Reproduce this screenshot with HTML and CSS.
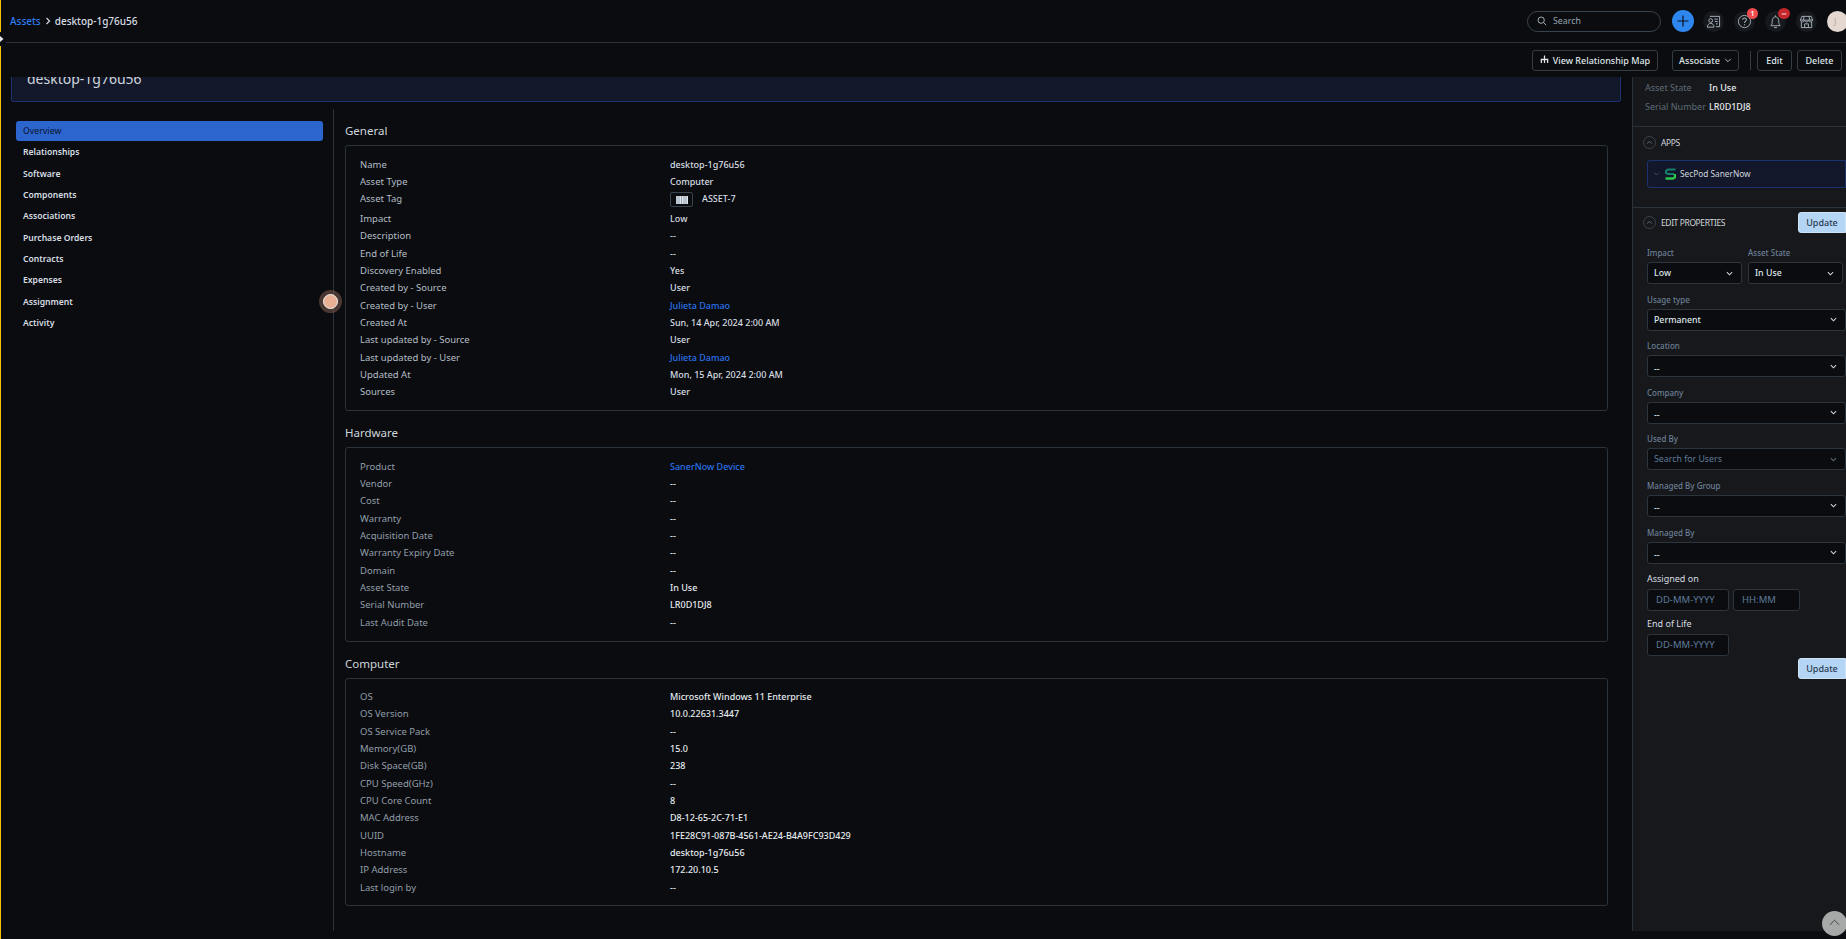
FILE: index.html
```html
<!DOCTYPE html>
<html lang="en">
<head>
<meta charset="utf-8">
<title>desktop-1g76u56</title>
<link rel="stylesheet" href="styles.css">
</head>
<body>
<div class="app">
  <header class="topbar">
    <nav class="crumbs"><a class="crumb-link">Assets</a><svg class="crumb-sep" viewBox="0 0 8 8"><path d="M2.5 1 5.5 4 2.5 7" fill="none" stroke="#c9d1da" stroke-width="1.3"/></svg><span class="crumb-current">desktop-1g76u56</span></nav>
    <div class="top-tools">
      <div class="search"><svg class="search-icon" viewBox="0 0 12 12"><circle cx="5" cy="5" r="3.8" fill="none" stroke="#c4ccd4"/><path d="M8 8l3 3" stroke="#c4ccd4"/></svg><span>Search</span></div>
      <button class="plus"><svg viewBox="0 0 12 12"><path d="M6 .5v11M.5 6h11" stroke="#0b1220" stroke-width="1.2"/></svg></button>
      <span class="tool"><svg viewBox="0 0 16 16"><circle cx="5" cy="7" r="2" fill="none" stroke="#aab3bc"/><path d="M1.5 14c0-2.500 1.500-4 3.500-4s3.500 1.500 3.500 4zM4 2.500h10.500v11h-4M9 5.500h3.500M9.500 8h3M10.500 10.500h2" fill="none" stroke="#aab3bc"/></svg></span>
      <span class="tool"><svg viewBox="0 0 16 16"><circle cx="8" cy="8" r="6.500" fill="none" stroke="#aab3bc"/><path d="M6 6.200c0-2.600 4-2.600 4 0 0 1.700-2 1.700-2 3.300M8 11v1" fill="none" stroke="#aab3bc" stroke-width="1.100"/></svg><b class="badge">1</b></span>
      <span class="tool"><svg viewBox="0 0 16 16"><path d="M3 12.500h10c-1.300-1.300-1.500-2.500-1.500-5C11.500 5 10 3 8 3S4.500 5 4.500 7.500c0 2.500-.2 3.700-1.500 5zM6.500 14.500h3M8 1.500V3" fill="none" stroke="#aab3bc"/></svg><b class="badge badge-dark">∞</b></span>
      <span class="tool"><svg viewBox="0 0 16 16"><path d="M3 2.500h10l1.500 4H1.500zM1.500 6.500c0 2.500 4.300 2.500 4.300 0 0 2.500 4.400 2.500 4.400 0 0 2.500 4.300 2.500 4.300 0M2.500 8.500v6h11v-6M6 14.500v-4h4v4M5.500 2.500l-1 4M10.500 2.500l1 4" fill="none" stroke="#aab3bc"/></svg></span>
      <span class="avatar">J</span>
    </div>
  </header>

  <div class="actions">
    <button class="btn btn-map"><svg class="map-icon" viewBox="0 0 10 10"><path d="M5 .5v4M1.500 9V5h7v4M5 4.500V9" fill="none" stroke="#dfe5ea" stroke-width="1.400"/></svg>View Relationship Map</button>
    <button class="btn btn-assoc">Associate<svg class="caret" viewBox="0 0 10 6"><path d="M1.500 1 5 4.500 8.500 1" fill="none" stroke="#dfe5ea"/></svg></button>
    <span class="action-sep"></span>
    <button class="btn btn-edit">Edit</button>
    <button class="btn btn-delete">Delete</button>
  </div>

  <div class="body">
    <main class="main">
      <div class="title-card"><h1>desktop-1g76u56</h1></div>
      <div class="columns">
        <aside class="sidenav">
          <a class="nav-item active">Overview</a>
          <a class="nav-item">Relationships</a>
          <a class="nav-item">Software</a>
          <a class="nav-item">Components</a>
          <a class="nav-item">Associations</a>
          <a class="nav-item">Purchase Orders</a>
          <a class="nav-item">Contracts</a>
          <a class="nav-item">Expenses</a>
          <a class="nav-item">Assignment</a>
          <a class="nav-item">Activity</a>
        </aside>
        <div class="details">
          <section class="group">
            <h2>General</h2>
            <dl class="card card-general">
              <div class="row"><dt>Name</dt><dd>desktop-1g76u56</dd></div>
              <div class="row"><dt>Asset Type</dt><dd>Computer</dd></div>
              <div class="row row-tag"><dt>Asset Tag</dt><dd class="tag-cell"><span class="barcode"><svg viewBox="0 0 12 8"><rect width="12" height="8" fill="#8ea0b5"/><path d="M1 0v8M3 0v8M4.500 0v8M6.500 0v8M8 0v8M10 0v8M11.500 0v8" stroke="#e6e9ec" stroke-width="1"/></svg></span>ASSET-7</dd></div>
              <div class="row"><dt>Impact</dt><dd>Low</dd></div>
              <div class="row"><dt>Description</dt><dd>--</dd></div>
              <div class="row"><dt>End of Life</dt><dd>--</dd></div>
              <div class="row"><dt>Discovery Enabled</dt><dd>Yes</dd></div>
              <div class="row"><dt>Created by - Source</dt><dd>User</dd></div>
              <div class="row"><dt>Created by - User</dt><dd><a class="link">Julieta Damao</a></dd></div>
              <div class="row"><dt>Created At</dt><dd>Sun, 14 Apr, 2024 2:00 AM</dd></div>
              <div class="row"><dt>Last updated by - Source</dt><dd>User</dd></div>
              <div class="row"><dt>Last updated by - User</dt><dd><a class="link">Julieta Damao</a></dd></div>
              <div class="row"><dt>Updated At</dt><dd>Mon, 15 Apr, 2024 2:00 AM</dd></div>
              <div class="row"><dt>Sources</dt><dd>User</dd></div>
            </dl>
          </section>
          <section class="group">
            <h2>Hardware</h2>
            <dl class="card">
              <div class="row"><dt>Product</dt><dd><a class="link">SanerNow Device</a></dd></div>
              <div class="row"><dt>Vendor</dt><dd>--</dd></div>
              <div class="row"><dt>Cost</dt><dd>--</dd></div>
              <div class="row"><dt>Warranty</dt><dd>--</dd></div>
              <div class="row"><dt>Acquisition Date</dt><dd>--</dd></div>
              <div class="row"><dt>Warranty Expiry Date</dt><dd>--</dd></div>
              <div class="row"><dt>Domain</dt><dd>--</dd></div>
              <div class="row"><dt>Asset State</dt><dd>In Use</dd></div>
              <div class="row"><dt>Serial Number</dt><dd>LR0D1DJ8</dd></div>
              <div class="row"><dt>Last Audit Date</dt><dd>--</dd></div>
            </dl>
          </section>
          <section class="group">
            <h2>Computer</h2>
            <dl class="card">
              <div class="row"><dt>OS</dt><dd>Microsoft Windows 11 Enterprise</dd></div>
              <div class="row"><dt>OS Version</dt><dd>10.0.22631.3447</dd></div>
              <div class="row"><dt>OS Service Pack</dt><dd>--</dd></div>
              <div class="row"><dt>Memory(GB)</dt><dd>15.0</dd></div>
              <div class="row"><dt>Disk Space(GB)</dt><dd>238</dd></div>
              <div class="row"><dt>CPU Speed(GHz)</dt><dd>--</dd></div>
              <div class="row"><dt>CPU Core Count</dt><dd>8</dd></div>
              <div class="row"><dt>MAC Address</dt><dd>D8-12-65-2C-71-E1</dd></div>
              <div class="row"><dt>UUID</dt><dd>1FE28C91-087B-4561-AE24-B4A9FC93D429</dd></div>
              <div class="row"><dt>Hostname</dt><dd>desktop-1g76u56</dd></div>
              <div class="row"><dt>IP Address</dt><dd>172.20.10.5</dd></div>
              <div class="row"><dt>Last login by</dt><dd>--</dd></div>
            </dl>
          </section>
        </div>
      </div>
    </main>

    <aside class="panel">
      <div class="panel-summary">
        <div class="summary-row"><span class="summary-label">Asset State</span><span class="summary-value">In Use</span></div>
        <div class="summary-row"><span class="summary-label">Serial Number</span><span class="summary-value">LR0D1DJ8</span></div>
      </div>
      <section class="panel-apps">
        <div class="panel-head"><span class="collapse"><svg viewBox="0 0 10 6"><path d="M1.500 4.500 5 1.500 8.500 4.500" fill="none" stroke="#7d8b98"/></svg></span><span>APPS</span></div>
        <div class="app-card">
          <svg class="app-caret" viewBox="0 0 10 6"><path d="M1.500 1 5 4.500 8.500 1" fill="none" stroke="#5d6c7a"/></svg>
          <svg class="app-logo" viewBox="0 0 11 12"><path d="M10.500 1.500H3L1 3v2l2 1h6" fill="none" stroke="#17806a" stroke-width="2"/><path d="M.5 10.500H8l2-1.300V6" fill="none" stroke="#2bc84b" stroke-width="2.400"/></svg>
          <span>SecPod SanerNow</span>
        </div>
      </section>
      <section class="panel-edit">
        <div class="edit-head">
          <div class="panel-head"><span class="collapse"><svg viewBox="0 0 10 6"><path d="M1.500 4.500 5 1.500 8.500 4.500" fill="none" stroke="#7d8b98"/></svg></span><span>EDIT PROPERTIES</span></div>
          <button class="update">Update</button>
        </div>
        <div class="field-pair">
          <div class="field field-half"><label>Impact</label><div class="select">Low<svg class="chev" viewBox="0 0 8 5"><path d="M1 1 4 4 7 1" fill="none" stroke="#cfd6dc" stroke-width="1.200"/></svg></div></div>
          <div class="field field-half"><label>Asset State</label><div class="select">In Use<svg class="chev" viewBox="0 0 8 5"><path d="M1 1 4 4 7 1" fill="none" stroke="#cfd6dc" stroke-width="1.200"/></svg></div></div>
        </div>
        <div class="field"><label>Usage type</label><div class="select">Permanent<svg class="chev" viewBox="0 0 8 5"><path d="M1 1 4 4 7 1" fill="none" stroke="#cfd6dc" stroke-width="1.200"/></svg></div></div>
        <div class="field"><label>Location</label><div class="select"><span class="dash">--</span><svg class="chev" viewBox="0 0 8 5"><path d="M1 1 4 4 7 1" fill="none" stroke="#cfd6dc" stroke-width="1.200"/></svg></div></div>
        <div class="field"><label>Company</label><div class="select"><span class="dash">--</span><svg class="chev" viewBox="0 0 8 5"><path d="M1 1 4 4 7 1" fill="none" stroke="#cfd6dc" stroke-width="1.200"/></svg></div></div>
        <div class="field"><label>Used By</label><div class="select select-muted">Search for Users<svg class="chev" viewBox="0 0 8 5"><path d="M1 1 4 4 7 1" fill="none" stroke="#5d6c7a" stroke-width="1.200"/></svg></div></div>
        <div class="field"><label>Managed By Group</label><div class="select"><span class="dash">--</span><svg class="chev" viewBox="0 0 8 5"><path d="M1 1 4 4 7 1" fill="none" stroke="#cfd6dc" stroke-width="1.200"/></svg></div></div>
        <div class="field"><label>Managed By</label><div class="select"><span class="dash">--</span><svg class="chev" viewBox="0 0 8 5"><path d="M1 1 4 4 7 1" fill="none" stroke="#cfd6dc" stroke-width="1.200"/></svg></div></div>
        <div class="date-field date-first"><label class="date-label">Assigned on</label><div class="date-inputs"><span class="input input-date">DD-MM-YYYY</span><span class="input input-time">HH:MM</span></div></div>
        <div class="date-field"><label class="date-label">End of Life</label><div class="date-inputs"><span class="input input-date">DD-MM-YYYY</span></div></div>
        <div class="edit-foot"><button class="update">Update</button></div>
      </section>
    </aside>
  </div>
</div>
<span class="pin"></span>
<span class="edge-handle"><svg viewBox="0 0 4 6"><path d="M0 0 3.500 3 0 6z" fill="#e6e9ec"/></svg></span>
<button class="to-top"><svg viewBox="0 0 12 7"><path d="M1 6 6 1 11 6" fill="none" stroke="#3a3d40" stroke-width="1"/></svg></button>
</body>
</html>
```
FILE: styles.css
```css
* { box-sizing: border-box; }
html, body { height: 100%; }
body {
  margin: 0;
  overflow: hidden;
  background: #0a0c0f;
  color: #dfe5ea;
  font-family: "Noto Sans", "Liberation Sans", sans-serif;
  font-size: 10px;
  position: relative;
}
.app {
  width: 1846px;
  height: 939px;
  display: flex;
  flex-direction: column;
  border-left: 1px solid #f5c400;
  overflow: hidden;
}
button { font-family: inherit; cursor: pointer; }

/* Top bar */
.topbar {
  height: 43px;
  flex: none;
  margin-left: 5px;
  padding-left: 4px;
  border-bottom: 1px solid #2a323b;
  display: flex;
  align-items: center;
  justify-content: space-between;
}
.crumbs { display: flex; align-items: center; font-size: 10px; font-weight: 500; }
.crumb-link { color: #2f7bf0; }
.crumb-sep { width: 8px; height: 8px; margin: 0 3px; }
.crumb-current { color: #d7dde3; }
.top-tools { display: flex; align-items: center; }
.search {
  width: 134px;
  height: 21px;
  margin-right: 11px;
  padding-left: 9px;
  border: 1px solid #3a444e;
  border-radius: 11px;
  display: flex;
  align-items: center;
  gap: 6px;
  color: #98a4af;
  font-size: 8.800px;
}
.search-icon { width: 10px; height: 10px; }
.plus {
  width: 22px;
  height: 22px;
  padding: 5px;
  border: 0;
  border-radius: 50%;
  background: #2e86ef;
  margin-right: 9px;
  display: flex;
}
.tool {
  width: 21px;
  height: 21px;
  margin-right: 10px;
  border-radius: 50%;
  background: #16191d;
  display: flex;
  align-items: center;
  justify-content: center;
  position: relative;
}
.tool svg { width: 15px; height: 15px; }
.badge {
  position: absolute;
  top: -3px;
  right: -3px;
  width: 11px;
  height: 11px;
  border-radius: 50%;
  background: #ee4b4f;
  color: #fff;
  font-size: 7px;
  font-weight: 600;
  line-height: 11px;
  text-align: center;
}
.badge-dark { background: #c4272c; color: #f3b4b6; right: -4px; width: 12px; }
.avatar {
  width: 21px;
  height: 21px;
  flex: none;
  margin-right: -2px;
  border-radius: 50%;
  background: #e4d8d0;
  color: #b5a89f;
  font-size: 9px;
  line-height: 21px;
  padding-left: 7px;
}

/* Action bar */
.actions {
  height: 34px;
  flex: none;
  display: flex;
  align-items: center;
  justify-content: flex-end;
  padding-right: 4px;
  padding-top: 1px;
  background: #0a0c0f;
}
.btn {
  height: 21px;
  padding: 0;
  border: 1px solid #333c45;
  border-radius: 3px;
  background: #0a0c0f;
  color: #dfe5ea;
  font-size: 9px;
  font-weight: 500;
  display: inline-flex;
  align-items: center;
  justify-content: center;
  white-space: nowrap;
}
.btn-map { width: 126px; margin-right: 14px; }
.map-icon { width: 9px; height: 9px; flex: none; margin-right: 4px; margin-top: -3px; }
.caret { width: 8px; height: 5px; flex: none; margin-left: 4px; }
.btn-assoc { width: 67px; }
.action-sep { width: 1px; height: 19px; background: #333c45; margin: 0 6px 0 11px; }
.btn-edit { width: 35px; margin-right: 5px; }
.btn-delete { width: 45px; }

/* Body columns */
.body { flex: 1; min-height: 0; display: flex; }
.main { flex: 1; min-width: 0; overflow: hidden; padding-left: 10px; }
.title-card {
  width: 1610px;
  height: 25px;
  background: #12172a;
  border: 1px solid #1d3170;
  border-top: 0;
  border-radius: 0 0 3px 3px;
  padding-left: 15px;
  overflow: hidden;
}
.title-card h1 {
  margin: -9px 0 0;
  font-size: 14px;
  font-weight: 400;
  line-height: 22px;
  color: #d0d6dc;
}
.columns { display: flex; margin-top: 7px; }
.sidenav {
  width: 323px;
  flex: none;
  padding: 12px 10px 0 5px;
  border-right: 1px solid #2a323b;
  min-height: 822px;
}
.nav-item {
  display: block;
  height: 21.330px;
  line-height: 20px;
  padding-left: 7px;
  font-size: 8.600px;
  font-weight: 600;
  color: #d7dde3;
}
.nav-item.active {
  background: #2d65cf;
  color: #0d1d3d;
  font-weight: 500;
  border-radius: 3px;
  height: 20px;
  margin-bottom: 1.330px;
}
.details { width: 1274px; padding: 14px 0 0 11px; }
.group + .group { margin-top: 14px; }
.group h2 {
  margin: 0 0 6px;
  font-size: 11.500px;
  font-weight: 400;
  line-height: 16px;
  color: #cfd6dc;
}
.card {
  margin: 0;
  padding: 9.500px 14px;
  border: 1px solid #2a323b;
  border-radius: 3px;
}
.row { display: flex; height: 17.330px; line-height: 17px; }
.row dt { width: 310px; flex: none; color: #939eaa; font-size: 9.500px; }
.row dd { margin: 0; color: #e6ebef; font-size: 9px; font-weight: 500; }
.card-general dt { color: #b4bdc6; }
.card-general dd { color: #d7dde3; }
.row-tag { height: 20px; }
.tag-cell { display: flex; }
.barcode {
  width: 23px;
  height: 15px;
  margin: 2px 9px 0 0;
  border: 1px solid #3a444e;
  border-radius: 2px;
  display: flex;
  align-items: center;
  justify-content: center;
}
.barcode svg { width: 12px; height: 8px; }
.link { color: #2a72ea; }

/* Right panel */
.panel {
  width: 214px;
  flex: none;
  height: 854px;
  background: #17181b;
  border-left: 1px solid #2a323b;
}
.panel-summary {
  height: 50px;
  padding: 1px 0 0 12px;
  border-bottom: 1px solid #2a323b;
}
.summary-row { display: flex; height: 19px; line-height: 19px; }
.summary-label { width: 64px; flex: none; color: #5e6b77; font-size: 9px; white-space: nowrap; }
.summary-value { color: #e6ebef; font-size: 9px; font-weight: 500; }
.panel-apps { height: 81px; border-bottom: 1px solid #2a323b; padding: 5px 0 0 10px; }
.panel-head {
  display: flex;
  align-items: center;
  gap: 5px;
  height: 20px;
  font-size: 8.500px;
  letter-spacing: -.4px;
  color: #cfd6dc;
}
.collapse {
  width: 13px;
  height: 13px;
  border: 1px solid #3a444e;
  border-radius: 50%;
  display: flex;
  align-items: center;
  justify-content: center;
}
.collapse svg { width: 7px; height: 5px; }
.app-card {
  height: 28px;
  margin: 8px 0 0 4px;
  padding: 0 0 1px 5px;
  background: #12172a;
  border: 1px solid #1d3170;
  border-radius: 3px 0 0 3px;
  display: flex;
  align-items: center;
  font-size: 8.300px;
  color: #cfd6dc;
}
.app-caret { width: 7px; height: 4px; margin-right: 5px; }
.app-logo { width: 11px; height: 12px; margin-right: 4px; }
.panel-edit { padding: 4px 0 0 14px; }
.edit-head { display: flex; justify-content: space-between; align-items: flex-start; margin-left: -4px; }
.update {
  width: 48px;
  height: 21px;
  padding: 0;
  border: 1px solid #cfe3f7;
  border-radius: 3px 0 0 3px;
  background: #b5d5f4;
  color: #283b52;
  font-size: 9px;
  font-weight: 500;
}
.field-pair { display: flex; gap: 6px; margin-top: 13px; }
.field { margin-bottom: 8.600px; }
.field label {
  display: block;
  height: 14px;
  line-height: 14px;
  margin-bottom: 2px;
  color: #6b7f95;
  font-size: 8px;
  font-weight: 500;
}
.field-half { width: 95px; }
.select {
  height: 22px;
  padding: 0 8px 0 6px;
  border: 1px solid #2c353e;
  border-radius: 3px;
  background: #0a0c0f;
  color: #dfe5ea;
  font-size: 8.800px;
  font-weight: 500;
  line-height: 20px;
  display: flex;
  align-items: center;
  justify-content: space-between;
}
.select-muted { color: #5f7a99; font-weight: 400; }
.dash { margin-top: 5px; }
.chev { width: 7px; height: 5px; }
.date-first { margin-top: -1px; }
.date-field + .date-field { margin-top: 5px; }
.date-label { display: block; height: 15px; line-height: 15px; color: #d7dde3; font-size: 9px; margin-bottom: 3px; }
.date-inputs { display: flex; gap: 4px; }
.input {
  height: 22px;
  padding-left: 8px;
  border: 1px solid #2c353e;
  border-radius: 3px;
  background: #0a0c0f;
  color: #5f7a99;
  font-size: 9.500px;
  line-height: 20px;
}
.input-date { width: 82px; }
.input-time { width: 67px; }
.edit-foot { display: flex; justify-content: flex-end; margin-top: 2px; }

/* Overlays */
.pin {
  position: absolute;
  left: 323px;
  top: 294px;
  width: 15px;
  height: 15px;
  border-radius: 50%;
  background: #e8b196;
  border: 1.500px solid #f0f0f0;
  box-shadow: 0 0 0 4px rgba(150, 110, 90, .45);
}
.edge-handle {
  position: absolute;
  left: 0;
  top: 32px;
  width: 4px;
  height: 14px;
  padding-top: 4px;
  background: #0a0c0f;
  display: flex;
}
.edge-handle svg { width: 4px; height: 6px; }
.to-top {
  position: absolute;
  left: 1822px;
  top: 911px;
  width: 25px;
  height: 25px;
  padding: 8px 7px;
  border: 0;
  border-radius: 50%;
  background: #a7a8a8;
  display: flex;
}
.to-top svg { width: 11px; height: 7px; }
```
